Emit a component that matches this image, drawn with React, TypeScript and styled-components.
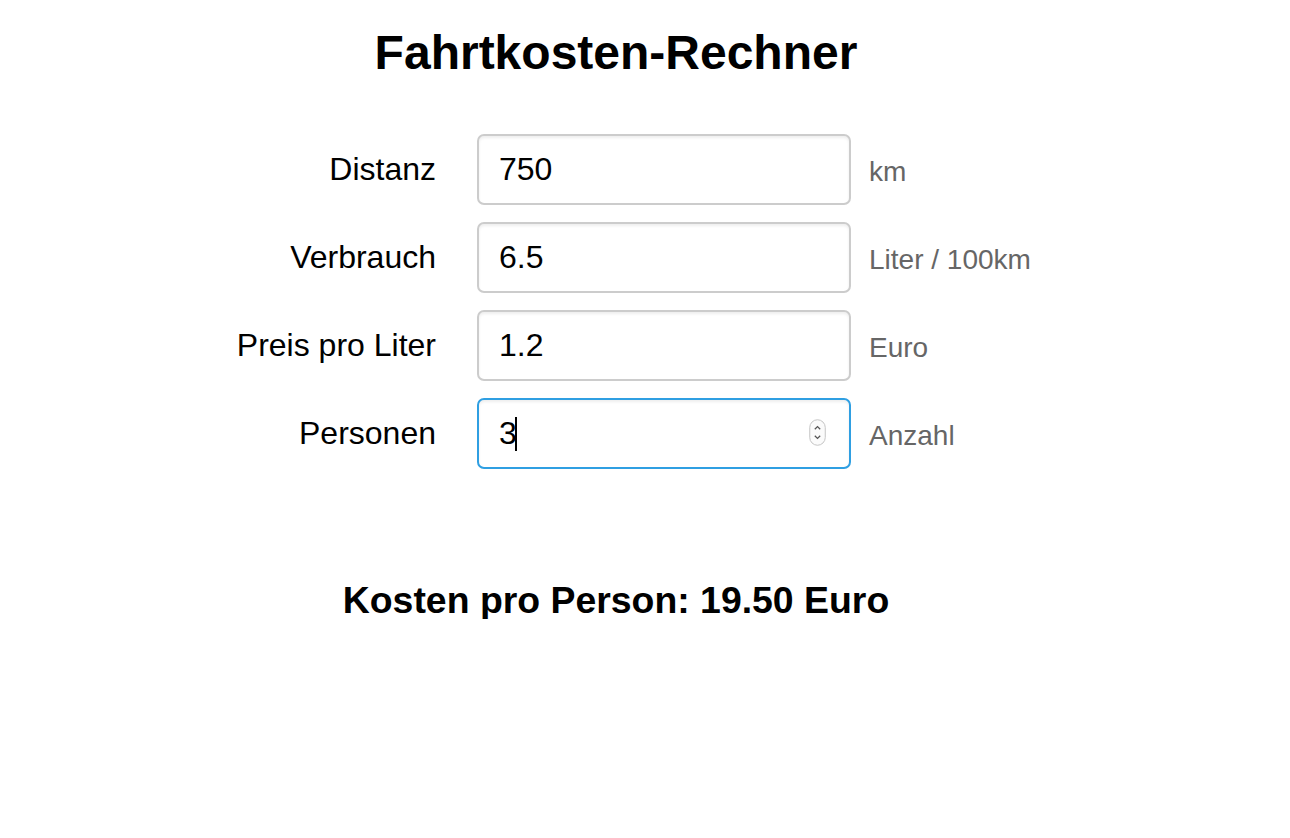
import React from "react";
import styled, { createGlobalStyle } from "styled-components";

const GlobalStyle = createGlobalStyle`
  html, body {
    margin: 0;
    padding: 0;
    background: #ffffff;
    font-family: "Liberation Sans", Arial, Helvetica, sans-serif;
    color: #000;
  }
`;

const Page = styled.div`
  width: 1232px;
  display: flex;
  flex-direction: column;
  align-items: center;
`;

const Title = styled.h1`
  margin: 29px 0 57px;
  font-size: 48px;
  line-height: 48px;
  font-weight: 700;
  text-align: center;
`;

const Form = styled.form`
  align-self: stretch;
  display: grid;
  grid-template-columns: 477px 374px auto;
  grid-auto-rows: 71px;
  row-gap: 17px;
  margin: 0;
`;

const Label = styled.label`
  padding-right: 41px;
  text-align: right;
  font-size: 32px;
  line-height: 71px;
  color: #000;
`;

const InputWrap = styled.div`
  position: relative;
  height: 71px;
`;

const Field = styled.input<{ $focused?: boolean }>`
  box-sizing: border-box;
  width: 374px;
  height: 71px;
  padding: 0 20px;
  border: 2px solid ${(p) => (p.$focused ? "#2f9fe2" : "#cccccc")};
  border-radius: 7px;
  box-shadow: inset 0 2px 3px rgba(0, 0, 0, 0.07);
  font-family: "Liberation Sans", Arial, Helvetica, sans-serif;
  font-size: 32px;
  color: #000;
  background: #fff;
  outline: none;
`;

const Caret = styled.span`
  position: absolute;
  left: 38px;
  top: 19px;
  width: 2px;
  height: 34px;
  background: #000;
`;

const Spinner = styled.svg`
  position: absolute;
  left: 332px;
  top: 21px;
`;

const Unit = styled.span`
  box-sizing: border-box;
  height: 71px;
  padding: 2px 0 0 18px;
  font-size: 28px;
  line-height: 71px;
  color: #666666;
  overflow: visible;
`;

const Result = styled.h2`
  margin: 113px 0 0;
  font-size: 37.4px;
  line-height: 37px;
  font-weight: 700;
  text-align: center;
`;

const rows = [
  { label: "Distanz", value: "750", unit: "km" },
  { label: "Verbrauch", value: "6.5", unit: "Liter / 100km" },
  { label: "Preis pro Liter", value: "1.2", unit: "Euro" },
  { label: "Personen", value: "3", unit: "Anzahl", focused: true },
];

export default function App() {
  return (
    <>
      <GlobalStyle />
      <Page>
        <Title>Fahrtkosten-Rechner</Title>
        <Form onSubmit={(e) => e.preventDefault()}>
          {rows.map((r) => (
            <React.Fragment key={r.label}>
              <Label>{r.label}</Label>
              <InputWrap>
                <Field type="text" defaultValue={r.value} $focused={r.focused} />
                {r.focused && (
                  <>
                    <Caret />
                    <Spinner width="17" height="27" viewBox="0 0 17 27">
                      <rect x="0.75" y="0.75" width="15.5" height="25.5" rx="7.75" fill="#fbfbfb" stroke="#c4c4c4" strokeWidth="1" />
                      <path d="M5.8 10.2 L8.5 7.6 L11.2 10.2" fill="none" stroke="#555" strokeWidth="1.3" />
                      <path d="M5.8 16.8 L8.5 19.4 L11.2 16.8" fill="none" stroke="#555" strokeWidth="1.3" />
                    </Spinner>
                  </>
                )}
              </InputWrap>
              <Unit>{r.unit}</Unit>
            </React.Fragment>
          ))}
        </Form>
        <Result>Kosten pro Person: 19.50 Euro</Result>
      </Page>
    </>
  );
}
